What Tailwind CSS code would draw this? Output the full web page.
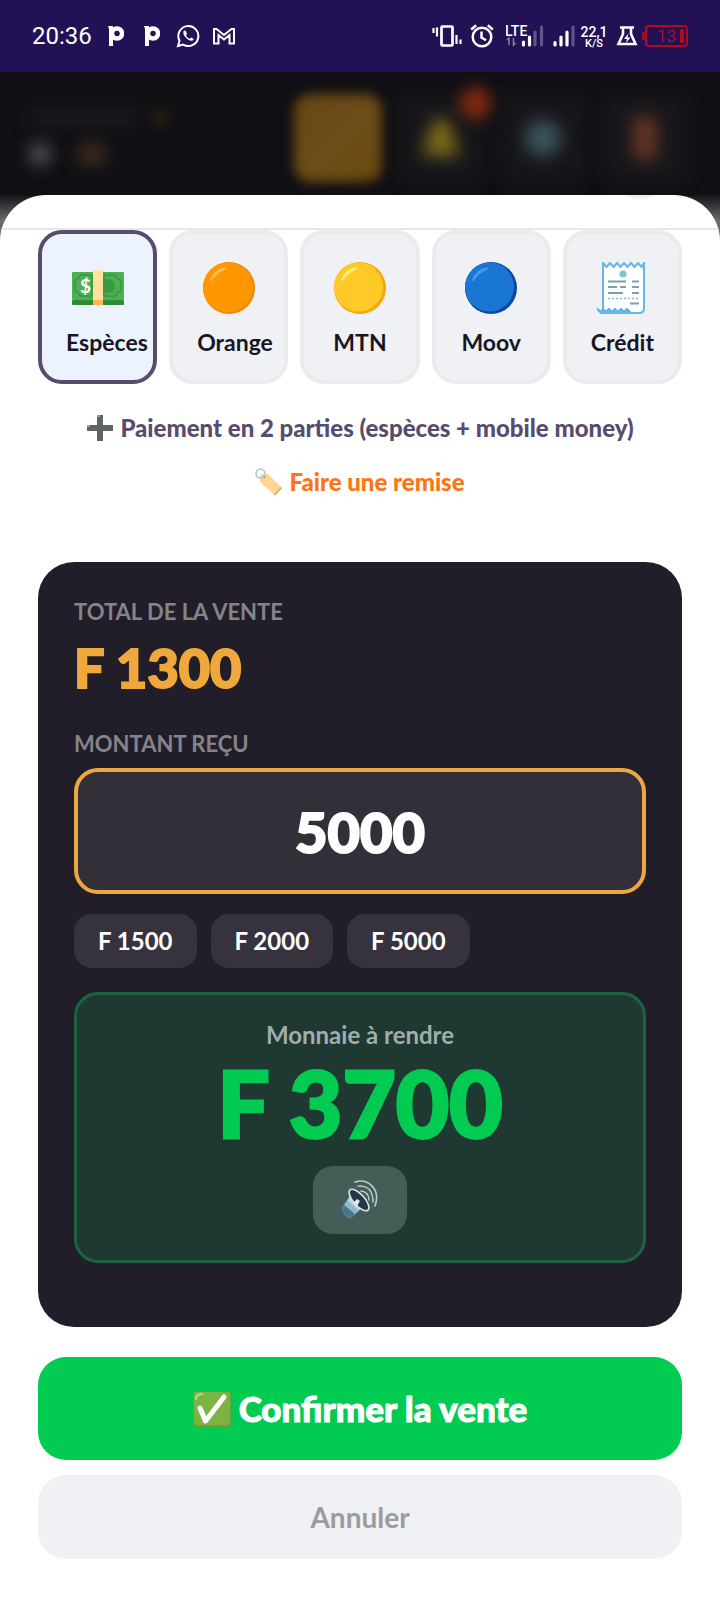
<!DOCTYPE html>
<html lang="fr">
<head>
  <meta charset="UTF-8" />
  <meta name="viewport" content="width=device-width, initial-scale=1.0"/>
  <title>Confirmer la vente</title>
  <script src="https://cdn.jsdelivr.net/npm/@tailwindcss/browser@4"></script>
</head>
<body class="bg-white font-['Lato','Liberation_Sans',sans-serif] text-[#171624]">

  <!-- Barre de statut -->
  <div class="h-[72px] bg-[#221155] px-8 flex items-center justify-between text-white font-['Roboto',sans-serif]">
    <div class="flex items-center">
      <span class="text-2xl w-[76px]">20:36</span>
      <svg class="w-4 h-5 mr-5" viewBox="0 0 16 20" fill="none"><path d="M0 0h5v20H1V3z" fill="#fff"/><circle cx="9" cy="7.500" r="5" stroke="#fff" stroke-width="4.500"/></svg>
      <svg class="w-4 h-5 mr-4" viewBox="0 0 16 20" fill="none"><path d="M0 0h5v20H1V3z" fill="#fff"/><circle cx="9" cy="7.500" r="5" stroke="#fff" stroke-width="4.500"/></svg>
      <svg class="size-6 mr-3" viewBox="0 0 24 24" fill="none" stroke="#fff" stroke-width="2"><path d="M2 22l1.500-5.300A10 10 0 1 1 7.200 20.600z"/><path d="M8.500 6.500c-2.300 1.200-1 4.700 1.500 7.300s6.300 4.300 7.500 1.700c.4-.8 0-1-2.400-2.100l-1.400 1.400c-1.500-.5-3-2-3.700-3.600l1-1.300-1-2.700c-.3-.7-.8-.9-1.500-.7z" fill="#fff" stroke="none"/></svg>
      <svg class="w-6 h-5" viewBox="0 0 24 20" fill="none" stroke="#fff" stroke-width="2"><path d="M2 17.500V3h2.500L12 9l7.500-6H22v14.500h-4.500V9L12 13.500 6.500 9v8.500z"/></svg>
    </div>
    <div class="flex items-center">
      <svg class="w-[30px] h-6 mr-2" viewBox="0 0 30 24" fill="none" stroke="#fff"><rect x="9.500" y="2.500" width="11" height="19" rx="1" stroke-width="2.700"/><path d="M1.500 4v5M5 3.500v9M24.500 11v9M28.500 15.500v4.500" stroke-width="2.200"/></svg>
      <svg class="size-6 mr-3" viewBox="0 0 24 24" fill="none" stroke="#fff" stroke-width="2.500"><circle cx="12" cy="13" r="9.300"/><path d="M11.500 7.500v6l4.500 2.800M1.200 5.500l5-4.200M22.800 5.500l-5-4.200"/></svg>
      <svg class="w-[38px] h-6 mr-2" viewBox="0 0 38 24" fill="none">
        <path d="M17.500 18v3M23.500 13v8" stroke="#fff" stroke-width="3.200" stroke-linecap="round"/>
        <path d="M29 8v13M35.500 3v18" stroke="#61548a" stroke-width="3.200" stroke-linecap="round"/>
        <text x="-1" y="12" font-family="Roboto" font-weight="500" font-size="14" fill="#fff">LTE</text>
        <path d="M3 21v-7l-2 2M7.500 14v7l2-2" stroke="#8a80ab" stroke-width="1.500"/>
      </svg>
      <svg class="w-6 h-6 mr-1" viewBox="0 0 24 24" fill="none" stroke-width="3.200" stroke-linecap="round"><path d="M3 18.500v2.500M9 13v8M15 8v13" stroke="#fff"/><path d="M21 3v18" stroke="#61548a"/></svg>
      <div class="flex flex-col items-center mr-2 w-7 pt-1 font-medium">
        <span class="text-[14px] leading-3">22,1</span>
        <span class="text-[11px] leading-3">K/S</span>
      </div>
      <svg class="w-[22px] h-5 mr-1" viewBox="0 0 22 20"><path d="M4 1.500h14M7 2v6L2.500 18h17L15 8V2" fill="none" stroke="#fff" stroke-width="2.600"/><path d="M12.500 7.500l-4.500 5.500h3l-1 4 4.500-5.500h-3z" fill="#fff"/></svg>
      <svg class="w-[46px] h-6" viewBox="0 0 46 24" fill="none">
        <rect x="4" y="2" width="41" height="20" rx="3" stroke="#b3081d" stroke-width="2"/>
        <path d="M1.500 8v8" stroke="#b3081d" stroke-width="2.500"/>
        <rect x="38" y="5" width="4" height="14" rx="1" fill="#b3081d"/>
        <text x="15" y="18" font-family="Roboto" font-weight="300" font-size="17" fill="#d00c1c">13</text>
      </svg>
    </div>
  </div>

  <!-- En-tête flouté derrière la feuille -->
  <header class="h-[123px] bg-[#100f14] pl-7 pr-8 pt-2 flex items-center justify-between overflow-hidden" aria-hidden="true">
    <div class="flex flex-col gap-4">
      <div class="flex items-center gap-3">
        <span class="w-28 h-4 bg-[#1b1a1f] blur-[8px]"></span>
        <span class="w-4 h-4 rounded-full bg-[#302713] blur-[7px]"></span>
      </div>
      <div class="flex items-center gap-6">
        <span class="w-6 h-6 rounded-full bg-[#4c4c4e] blur-[8px]"></span>
        <span class="w-8 h-6 rounded-full bg-[#3a2a1c] blur-[8px]"></span>
      </div>
    </div>
    <div class="flex items-center gap-4">
      <span class="w-[88px] h-[88px] rounded-2xl bg-[linear-gradient(135deg,#684812,#6c4c18,#6c4a10)] blur-[6px]"></span>
      <div class="relative size-[86px] flex items-center justify-center">
        <span class="absolute inset-0 rounded-xl bg-[#17171b] blur-[8px]"></span>
        <svg class="relative w-9 h-10 blur-[8px]" viewBox="0 0 36 40"><path d="M18 0C9 0 6 14 0 38h36C30 14 27 0 18 0z" fill="#7d681a"/></svg>
        <span class="absolute -top-2 -right-2 size-8 rounded-full bg-[#822a10] blur-[8px]"></span>
      </div>
      <div class="relative size-[86px] flex items-center justify-center">
        <span class="absolute inset-0 rounded-xl bg-[#17171b] blur-[8px]"></span>
        <span class="relative size-9 rounded-full bg-[#3c525c] blur-[8px]"></span>
      </div>
      <div class="relative size-[86px] flex items-center justify-center">
        <span class="absolute inset-0 rounded-xl bg-[#18171b] blur-[8px]"></span>
        <span class="relative w-6 h-11 rounded-lg bg-[#643524] blur-[8px]"></span>
      </div>
    </div>
  </header>

  <!-- Feuille de paiement -->
  <div class="bg-[linear-gradient(to_bottom,#141318,#6a6a6a_26px)]">
    <main class="relative overflow-hidden rounded-t-[46px] bg-white pb-[52px]">
      <span class="absolute -top-12 right-[54px] size-[52px] rounded-full bg-[#eeeff3]"></span>
      <div class="h-[35px] border-b-2 border-[#e7e7e8]"></div>

      <div class="px-[38px]">
        <div class="grid grid-cols-5 gap-3 text-[23px] leading-8 font-bold">
          <button type="button" class="min-w-0 rounded-3xl border-4 border-[#584c6e] bg-[#edf2ff] px-6 pt-7 pb-[22px]">
            <svg class="mx-auto mb-3 size-[52px]" viewBox="0 0 52 52">
              <rect y="10" width="52" height="28" rx="1" fill="#4caf50"/>
              <rect y="38" width="52" height="5" rx="1" fill="#2e8b39"/>
              <path d="M8 13h12v21H8c0-3-2-4-5-5V18c3 0 5-2 5-5zM44 13H32v21h12c0-3 2-4 5-5V18c-3 0-5-2-5-5z" fill="none" stroke="#2e8b39" stroke-width="1"/>
              <circle cx="36" cy="24" r="7" fill="#399a42"/>
              <text x="8" y="31" font-family="Lato" font-weight="700" font-size="19" fill="#fff">$</text>
              <rect x="21" y="8" width="10" height="30" fill="#ffe0a0"/>
              <rect x="21" y="38" width="10" height="5" fill="#ffb84e"/>
            </svg>
            <span class="block whitespace-nowrap">Espèces</span>
          </button>
          <button type="button" class="min-w-0 rounded-3xl border-4 border-[#e9ebec] bg-[#f0f1f5] px-6 pt-7 pb-[22px]">
            <svg class="mx-auto mb-3 size-[52px]" viewBox="0 0 52 52"><circle cx="26" cy="26" r="26" fill="#f08504"/><circle cx="25" cy="25.500" r="25" fill="#ff9800"/><path d="M8 18Q12 8 22 6.500Q12 11 8 18z" fill="#ffbd55" stroke="#ffbd55" stroke-width="2" stroke-linejoin="round"/></svg>
            <span class="block whitespace-nowrap">Orange</span>
          </button>
          <button type="button" class="min-w-0 rounded-3xl border-4 border-[#e9ebec] bg-[#f0f1f5] px-6 pt-7 pb-[22px]">
            <svg class="mx-auto mb-3 size-[52px]" viewBox="0 0 52 52"><circle cx="26" cy="26" r="26" fill="#f9a60a"/><circle cx="24.500" cy="25" r="24.500" fill="#ffca28"/><path d="M8 18Q12 8 22 6.500Q12 11 8 18z" fill="#fff176" stroke="#fff176" stroke-width="2" stroke-linejoin="round"/></svg>
            <span class="block whitespace-nowrap">MTN</span>
          </button>
          <button type="button" class="min-w-0 rounded-3xl border-4 border-[#e9ebec] bg-[#f0f1f5] px-6 pt-7 pb-[22px]">
            <svg class="mx-auto mb-3 size-[52px]" viewBox="0 0 52 52"><circle cx="26" cy="26" r="26" fill="#0d47a1"/><circle cx="24.500" cy="25" r="24.500" fill="#1976d2"/><path d="M8 18Q12 8 22 6.500Q12 11 8 18z" fill="#4a97e4" stroke="#4a97e4" stroke-width="2" stroke-linejoin="round"/></svg>
            <span class="block whitespace-nowrap">Moov</span>
          </button>
          <button type="button" class="min-w-0 rounded-3xl border-4 border-[#e9ebec] bg-[#f0f1f5] px-6 pt-7 pb-[22px]">
            <svg class="mx-auto mb-3 size-[52px]" viewBox="0 0 52 52">
              <path d="M7 1l3.500 4 3.500-4 3.500 4L21 1l3.500 4L28 1l3.500 4L35 1l3.500 4L42 1l3.500 4L48 1v45q0 5-5 5H8l-1-5z" fill="#fff" stroke="#64b5ea" stroke-width="2"/>
              <path d="M1 46l4 3 2-3 3 3 3-3 3 3 3-3 3 3 3-3 3 3 3-3 3 3q1 3 4 3H8q-6 0-7-6z" fill="#64b5ea" stroke="#64b5ea"/>
              <circle cx="27" cy="12" r="3.500" fill="#7ac3cf"/>
              <path d="M12 19.500h18M36 19.500h7M12 25h9M24 25h6M36 25h7M12 31h15M36 31h7M34 41.500h9" stroke="#829eaa" stroke-width="1.800"/>
              <path d="M12 36.500h31" stroke="#8fb8c4" stroke-width="1.500" stroke-dasharray="2 2"/>
            </svg>
            <span class="block whitespace-nowrap">Crédit</span>
          </button>
        </div>

        <div class="mt-7 flex flex-col items-center gap-[22px] text-[24px] leading-8 font-black">
          <button type="button" class="flex items-center gap-1.5 whitespace-nowrap text-[#584c6e]">
            <svg class="size-7" viewBox="0 0 28 28"><path d="M11 1h6v10h10v6H17v10h-6V17H1v-6h10z" fill="#5f6467"/><path d="M11 1h3v2h-3zM1 11h3v2H1z" fill="#9aa0a3"/></svg>
            Paiement en 2 parties (espèces + mobile money)
          </button>
          <button type="button" class="flex items-center gap-1.5 whitespace-nowrap text-[#ff7411]">
            <svg class="size-7" viewBox="0 0 28 28"><path d="M5 9l1-3 7 0L27 20l-7 7.500L5 14z" fill="#ffd595"/><path d="M20 27.500L27 20l-1-1-7 7.500z" fill="#d9a35c"/><circle cx="9" cy="9" r="1.300" fill="#a87c4c"/><circle cx="5.500" cy="5.500" r="4.500" fill="none" stroke="#a3ccd4" stroke-width="1.500"/></svg>
            Faire une remise
          </button>
        </div>

        <!-- Calcul de la monnaie -->
        <section class="mt-16 rounded-[36px] bg-[#221e29] px-9 pt-9 pb-16">
          <p class="text-[22px] leading-7 font-bold text-[#86848a]">TOTAL DE LA VENTE</p>
          <p class="mt-2.5 text-[54px] leading-16 font-black text-[#efa83c] [-webkit-text-stroke:2px]">F 1300</p>
          <label for="recu" class="mt-[30px] block text-[22px] leading-7 font-bold text-[#86848a]">MONTANT REÇU</label>
          <input id="recu" type="text" inputmode="numeric" value="5000" class="mt-2.5 block h-[126px] w-full rounded-3xl border-4 border-[#eca941] bg-[#332f39] text-center text-[56px] font-black text-white outline-none [-webkit-text-stroke:2px]">

          <div class="mt-5 flex gap-3.5 text-[24px] font-bold text-white">
            <button type="button" class="h-[54px] rounded-[18px] bg-[#37333e] px-6">F 1500</button>
            <button type="button" class="h-[54px] rounded-[18px] bg-[#37333e] px-6">F 2000</button>
            <button type="button" class="h-[54px] rounded-[18px] bg-[#37333e] px-6">F 5000</button>
          </div>

          <div class="mt-6 flex flex-col items-center rounded-3xl border-3 border-[#1b653e] bg-[#1f3832] pt-[26px] pb-[26px]">
            <p class="text-[24px] leading-7 font-bold text-[#a0adaa]">Monnaie à rendre</p>
            <p class="mt-2 text-[92px] leading-[92px] font-black text-[#02cb52] [-webkit-text-stroke:3px]">F 3700</p>
            <button type="button" aria-label="Lire le montant" class="mt-[17px] flex h-[68px] w-[94px] items-center justify-center rounded-[20px] bg-[#445d57]">
              <svg class="size-10" viewBox="0 0 40 40" fill="none">
                <path d="M9 17L2 28q-1 3 3 7t7 2l9-8z" fill="#8db9cb"/>
                <path d="M4 25l-2 4q-1 3 3 6t7 2l3-3z" fill="#46788a"/>
                <path d="M10 12q-1 7-2 9l10 9q4-2 9-1z" fill="#b8d5e3"/>
                <ellipse cx="19" cy="20" rx="5.500" ry="13.500" transform="rotate(-42 19 20)" fill="#263845" stroke="#d5e3eb" stroke-width="1.600"/>
                <path d="M13 23l4-4 3 2-3 5z" fill="#dce9ef"/>
                <path d="M21 11q8 1 8 9M18 6q15-1 15 16M15 2C28-2 41 9 35 26" stroke="#b9c8c9" stroke-width="1.600" stroke-linecap="round"/>
              </svg>
            </button>
          </div>
        </section>

        <button type="button" class="mt-[30px] flex h-[103px] w-full items-center justify-center gap-2 rounded-[28px] bg-[#02cb52] text-[35px] font-black text-white [-webkit-text-stroke:1px]">
          <svg class="size-[38px]" viewBox="0 0 38 38"><rect y="1" width="38" height="36" rx="2" fill="#689f38"/><rect x="1" y="2" width="36" height="33" rx="2" fill="#7cb342"/><path d="M3 9q0-5 6-5" stroke="#aed581" stroke-width="2.500" fill="none" stroke-linecap="round"/><path d="M7 18l5.500 13L31 7" fill="none" stroke="#fff" stroke-width="5" stroke-linecap="round" stroke-linejoin="round"/></svg>
          Confirmer la vente
        </button>
        <button type="button" class="mt-[15px] h-[84px] w-full rounded-[28px] bg-[#f0f1f5] text-[28px] font-bold text-[#9c9c9d]">Annuler</button>
      </div>
    </main>
  </div>
</body>
</html>
